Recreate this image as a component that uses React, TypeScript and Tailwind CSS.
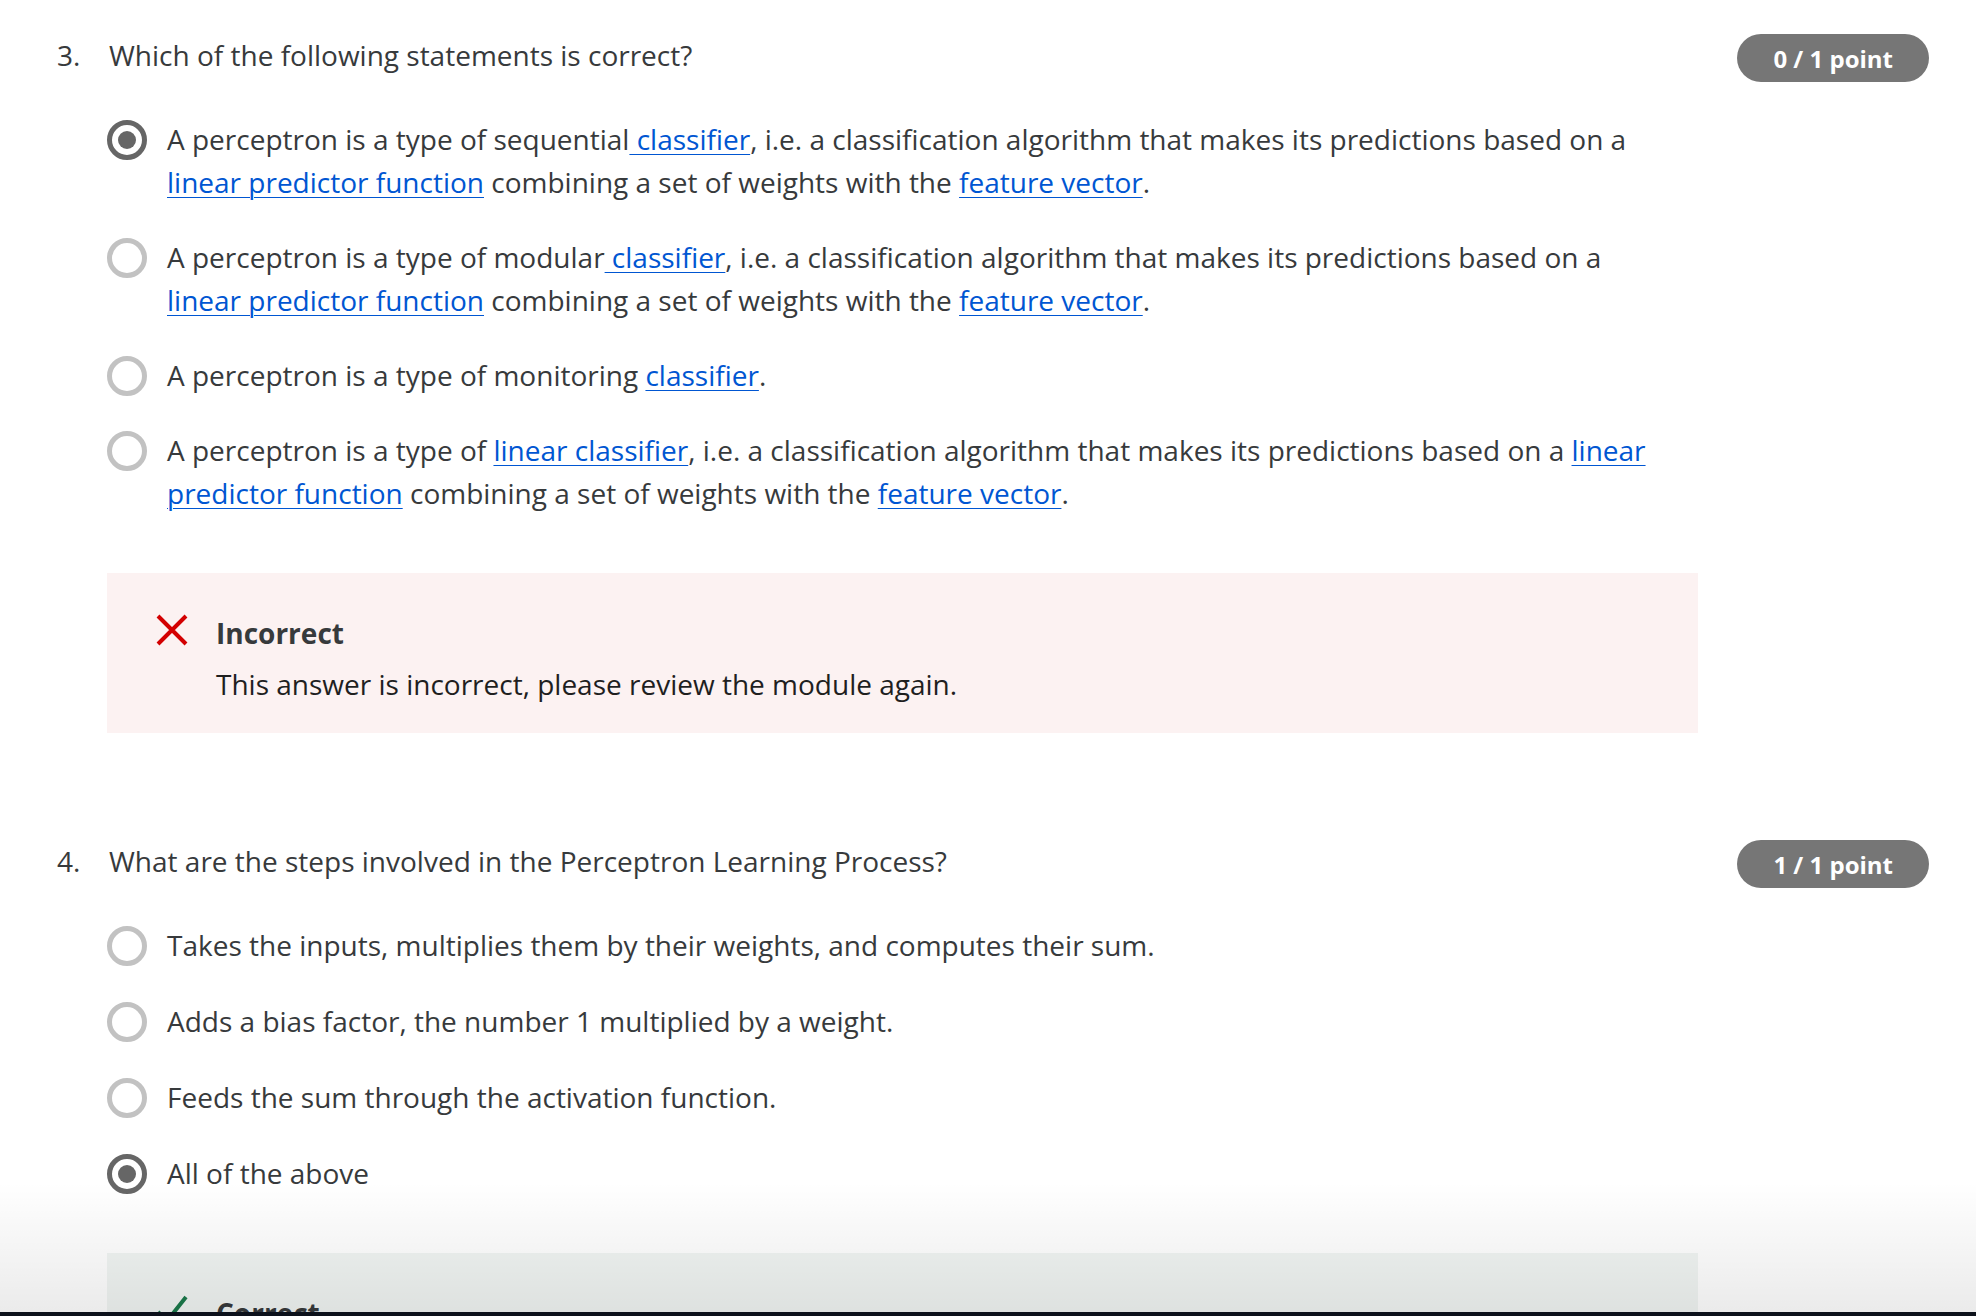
import type { ReactNode } from 'react';

const Link = ({ children }: { children: ReactNode }) => (
  <a href="#" className="text-[#0056d2] underline decoration-1 underline-offset-[4px]">
    {children}
  </a>
);

function Radio({ checked }: { checked?: boolean }) {
  if (checked) {
    return (
      <span className="mt-[1.5px] flex h-[40px] w-[40px] shrink-0 items-center justify-center rounded-full border-[5px] border-[#666666]">
        <span className="h-[18px] w-[18px] rounded-full bg-[#666666]" />
      </span>
    );
  }
  return <span className="mt-[1.5px] block h-[40px] w-[40px] shrink-0 rounded-full border-[5px] border-[#c2c2c2]" />;
}

function Option({ checked, children }: { checked?: boolean; children: ReactNode }) {
  return (
    <div className="flex items-start gap-[20px]">
      <Radio checked={checked} />
      <p className="flex-1 pr-[31px]">{children}</p>
    </div>
  );
}

function Badge({ label }: { label: string }) {
  return (
    <span className="flex h-[48px] shrink-0 items-center rounded-full bg-[#767676] px-[36px] text-[24px] font-bold text-white">
      {label}
    </span>
  );
}

function QuestionHeader({ num, text, points }: { num: string; text: string; points: string }) {
  return (
    <div className="flex items-start">
      <span className="w-[52px] shrink-0">{num}</span>
      <span className="flex-1">{text}</span>
      <Badge label={points} />
    </div>
  );
}

export default function App() {
  return (
    <div className="relative h-[1316px] w-full overflow-hidden bg-white font-['Open_Sans',sans-serif] text-[28px] leading-[43px] text-[#373a3c]">
      <div className="pl-[57px] pr-[47px] pt-[34px]">
        {/* Question 3 */}
        <QuestionHeader num="3." text="Which of the following statements is correct?" points="0 / 1 point" />

        <div className="ml-[50px] mt-[36px] flex w-[1591px] flex-col gap-[32px]">
          <Option checked>
            A perceptron is a type of sequential<Link> classifier</Link>, i.e. a classification algorithm that makes its
            predictions based on a <Link>linear predictor function</Link> combining a set of weights with the{' '}
            <Link>feature vector</Link>.
          </Option>
          <Option>
            A perceptron is a type of modular<Link> classifier</Link>, i.e. a classification algorithm that makes its
            predictions based on a <Link>linear predictor function</Link> combining a set of weights with the{' '}
            <Link>feature vector</Link>.
          </Option>
          <Option>
            A perceptron is a type of monitoring <Link>classifier</Link>.
          </Option>
          <Option>
            A perceptron is a type of <Link>linear classifier</Link>, i.e. a classification algorithm that makes its
            predictions based on a <Link>linear predictor function</Link> combining a set of weights with the{' '}
            <Link>feature vector</Link>.
          </Option>
        </div>

        <div className="ml-[50px] mt-[58px] w-[1591px] bg-[#fcf2f2] pb-[27px] pl-[49px] pt-[39px]">
          <div className="flex items-center gap-[28px]">
            <svg className="h-[32px] w-[32px] shrink-0 -translate-y-[4px]" viewBox="0 0 32 32">
              <path d="M2 2 L30 30 M30 2 L2 30" stroke="#d30001" strokeWidth="4" />
            </svg>
            <span className="font-bold">Incorrect</span>
          </div>
          <p className="mt-[8px] pl-[60px] text-[#1f1f1f]">This answer is incorrect, please review the module again.</p>
        </div>

        {/* Question 4 */}
        <div className="mt-[107px]">
          <QuestionHeader
            num="4."
            text="What are the steps involved in the Perceptron Learning Process?"
            points="1 / 1 point"
          />
        </div>

        <div className="ml-[50px] mt-[36px] flex w-[1591px] flex-col gap-[33px]">
          <Option>Takes the inputs, multiplies them by their weights, and computes their sum.</Option>
          <Option>Adds a bias factor, the number 1 multiplied by a weight.</Option>
          <Option>Feeds the sum through the activation function.</Option>
          <Option checked>All of the above</Option>
        </div>

        <div className="ml-[50px] mt-[58px] w-[1591px] bg-[#f1f5f3] pb-[27px] pl-[49px] pt-[39px]">
          <div className="flex items-center gap-[28px]">
            <svg className="h-[32px] w-[32px] shrink-0 -translate-y-[4px]" viewBox="0 0 32 32">
              <path d="M2 18 L11 27 L30 3" stroke="#1b7a4b" strokeWidth="4" fill="none" />
            </svg>
            <span className="font-bold">Correct</span>
          </div>
          <p className="mt-[8px] pl-[60px] text-[#1f1f1f]">That's correct!</p>
        </div>
      </div>

      {/* bottom fade + dark edge */}
      <div className="pointer-events-none absolute inset-x-0 bottom-[4px] h-[130px] bg-gradient-to-b from-transparent to-black/[0.08]" />
      <div className="absolute inset-x-0 bottom-0 h-[4px] bg-[#0c111b]" />
    </div>
  );
}
